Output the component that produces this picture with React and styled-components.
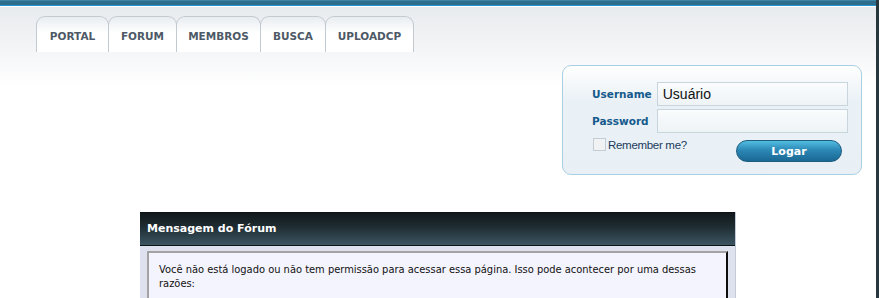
import React from 'react';
import styled, { createGlobalStyle } from 'styled-components';

const Global = createGlobalStyle`
  html, body { margin: 0; padding: 0; background: #fff; }
  body { font-family: Tahoma, "DejaVu Sans", sans-serif; }
`;

const Page = styled.div`
  width: 876px;
  height: 298px;
  border-right: 3px solid #28363e;
  overflow: hidden;
  background: linear-gradient(#e8ebee 6px, #f4f5f7 50px, #ffffff 85px);
`;

const TopBar = styled.div`
  height: 4px;
  background: #2e6d8c;
  border-top: 1px solid #3d86a8;
  border-bottom: 1px solid #2596cf;
  box-shadow: 0 1px 0 #ffffff;
`;

const Tabs = styled.nav`
  display: flex;
  padding: 10px 0 0 36px;
  height: 36px;
`;

const Tab = styled.a`
  box-sizing: border-box;
  width: ${p => p.w}px;
  height: 36px;
  margin-right: -1px;
  border: 1px solid #c3cbd2;
  border-bottom: none;
  border-radius: 9px 9px 0 0;
  background: linear-gradient(#e9edf0, #ffffff 16px);
  display: flex;
  align-items: center;
  justify-content: center;
  padding-top: 2px;
  font: bold 10.5px "DejaVu Sans", sans-serif;
  color: #4d5966;
  text-decoration: none;
`;

const LoginRow = styled.div`
  display: flex;
  justify-content: flex-end;
  padding: 13px 14px 0 0;
`;

const LoginBox = styled.form`
  box-sizing: border-box;
  width: 300px;
  height: 110px;
  border: 1px solid #a9d0e2;
  border-radius: 9px;
  background: linear-gradient(#ffffff, #eaf1f6 35px, #e8f0f6);
  padding: 16px 13px 0 29px;
`;

const Field = styled.div`
  display: flex;
  align-items: center;
  margin-bottom: 3px;
`;

const Label = styled.label`
  width: 65px;
  font: bold 10.5px "DejaVu Sans", sans-serif;
  color: #155a8c;
`;

const Input = styled.div`
  box-sizing: border-box;
  width: 192px;
  height: 24px;
  border: 1px solid #c9d5dc;
  background: linear-gradient(#fafcfd, #eef3f6);
  font: 14px "Liberation Sans", Arial, sans-serif;
  color: #111;
  padding: 3px 0 0 5px;
`;

const Bottom = styled.div`
  display: flex;
  align-items: flex-start;
  justify-content: space-between;
  margin-top: 5px;
`;

const Remember = styled.label`
  display: flex;
  align-items: center;
  font: 11.5px "Liberation Sans", Arial, sans-serif;
  letter-spacing: -0.3px;
  color: #1a3b5c;
  margin-left: 1px;
`;

const Box = styled.span`
  box-sizing: border-box;
  width: 13px;
  height: 13px;
  border: 1px solid #c6cdd2;
  background: #f1f2f3;
  margin-right: 2px;
`;

const Button = styled.button`
  width: 106px;
  height: 22px;
  margin: 2px 6px 0 0;
  border: 1px solid #1d5d80;
  border-radius: 11px;
  background: linear-gradient(#52bde0, #2c88b6 45%, #1b6894);
  color: #fff;
  font: bold 11px "DejaVu Sans", sans-serif;
  padding: 0;
`;

const Message = styled.section`
  width: 595px;
  margin: 37px auto 0;
  background: #dde2ee;
  border-right: 1px solid #c5cbd6;
`;

const MessageHead = styled.h2`
  margin: 0;
  height: 32px;
  border-top: 1px solid #0b1114;
  border-bottom: 1px solid #0d1518;
  background: linear-gradient(#11191c, #1d2a30 40%, #3b5561);
  color: #fff;
  font: bold 11px "DejaVu Sans", sans-serif;
  line-height: 31px;
  padding-left: 7px;
`;

const MessageBody = styled.div`
  margin: 5px 7px 0 7px;
  border-top: 2px solid #a3a3a3;
  border-left: 2px solid #a3a3a3;
  border-right: 2px solid #0d0d0d;
  background: #f4f4fe;
  padding: 10px 8px 20px 10px;
  font: 11px "DejaVu Sans Condensed", "DejaVu Sans", sans-serif;
  line-height: 14px;
  color: #111;
`;

const tabs = [
  ['PORTAL', 73],
  ['FORUM', 69],
  ['MEMBROS', 85],
  ['BUSCA', 66],
  ['UPLOADCP', 89],
];

export default function App() {
  return (
    <>
      <Global />
      <Page>
        <TopBar />
        <Tabs>
          {tabs.map(([t, w]) => (
            <Tab key={t} w={w}>{t}</Tab>
          ))}
        </Tabs>
        <LoginRow>
          <LoginBox>
            <Field>
              <Label>Username</Label>
              <Input>Usuário</Input>
            </Field>
            <Field>
              <Label>Password</Label>
              <Input />
            </Field>
            <Bottom>
              <Remember><Box />Remember me?</Remember>
              <Button type="button">Logar</Button>
            </Bottom>
          </LoginBox>
        </LoginRow>
        <Message>
          <MessageHead>Mensagem do Fórum</MessageHead>
          <MessageBody>
            Você não está logado ou não tem permissão para acessar essa página. Isso pode acontecer por uma dessas razões:
          </MessageBody>
        </Message>
      </Page>
    </>
  );
}
